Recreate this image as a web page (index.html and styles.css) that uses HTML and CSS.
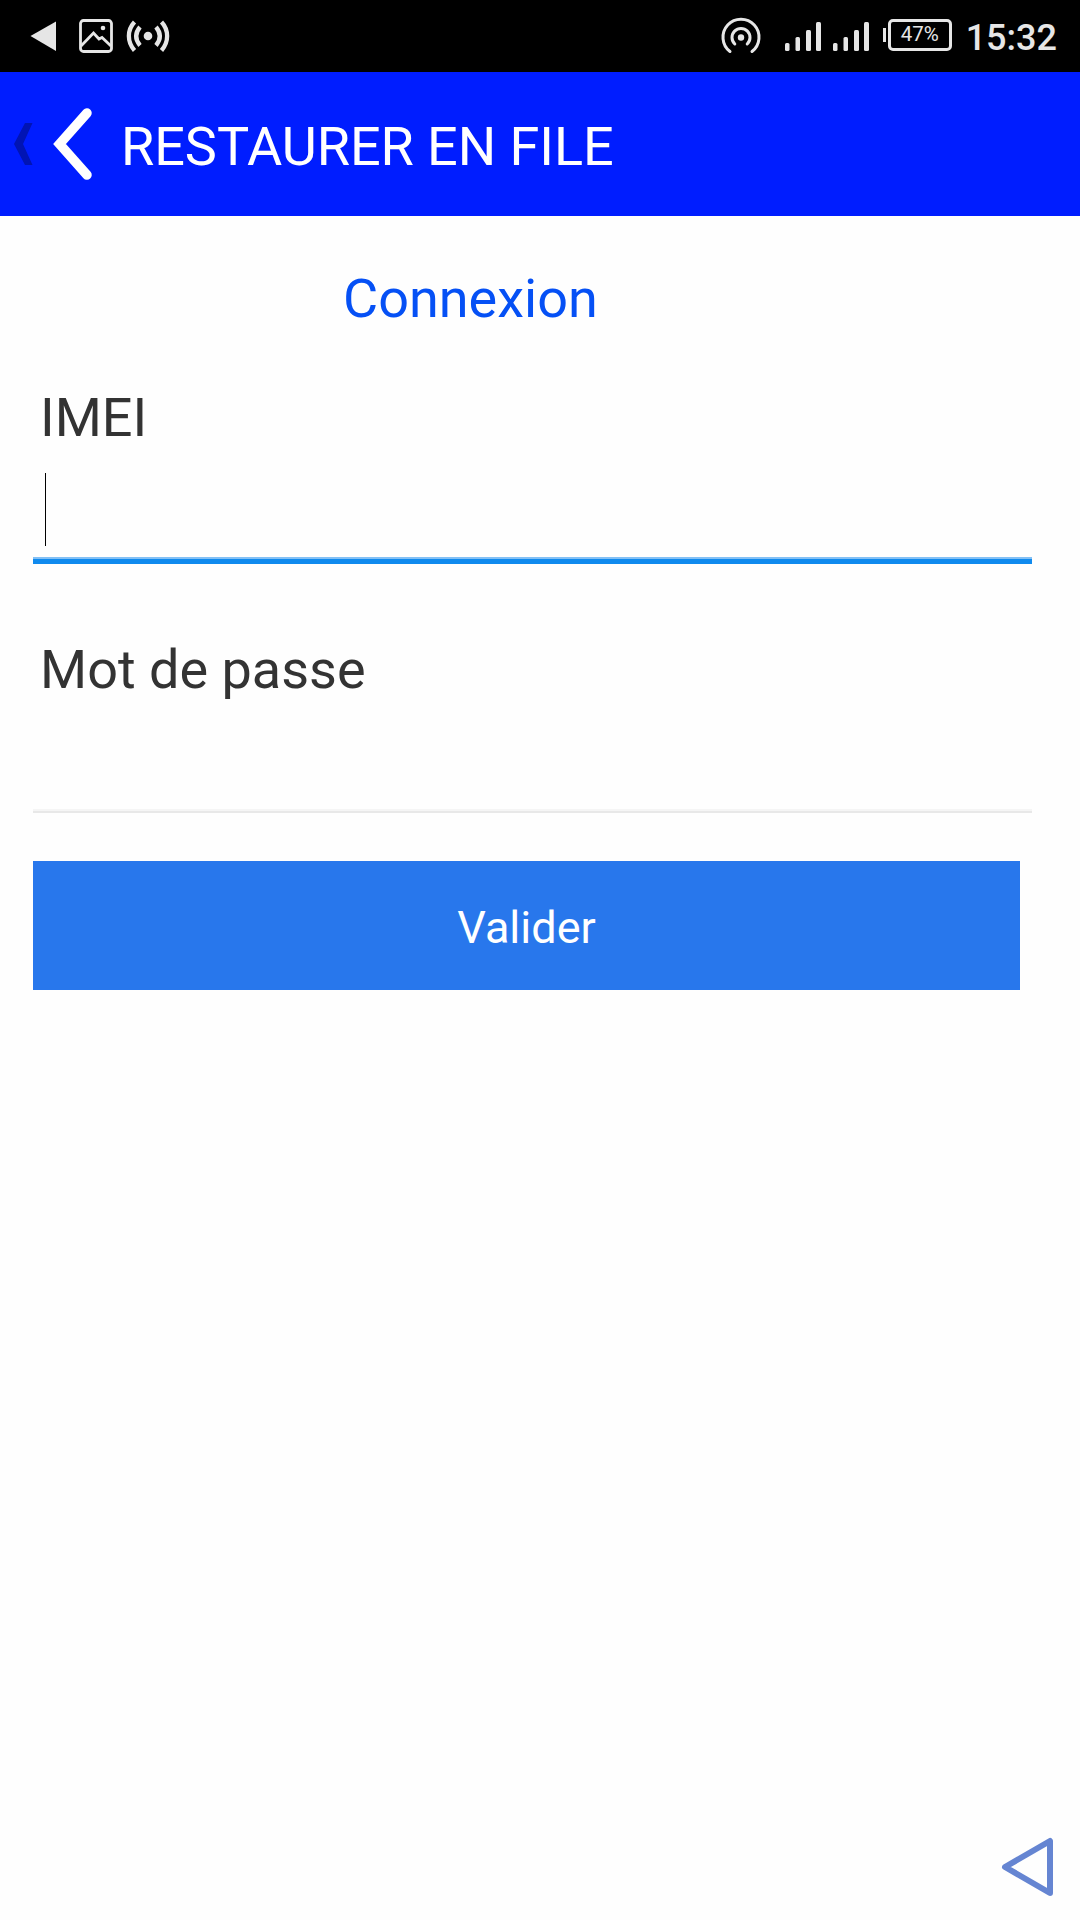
FILE: index.html
```
<!DOCTYPE html>
<html lang="fr">
  <head>
    <meta charset="UTF-8">
    <meta name="viewport" content="width=device-width, initial-scale=1.0">
    <title>Restaurer en file</title>
    <link rel="stylesheet" href="styles.css">
  </head>
  <body>
    <div class="statusbar">
      <svg class="notifications" width="240" height="72" viewBox="0 0 240 72">
        <path d="M30.5 36 L56 21.5 V51 Z" fill="#e6e6e6"/>
        <g fill="none" stroke="#e6e6e6">
          <rect x="80.5" y="20.5" width="31" height="31" rx="3" stroke-width="2.8"/>
          <path d="M81 46 L93.5 33 L99 39 L102 37.5 L111 46" stroke-width="2.8"/>
          <path d="M134.500 22 C127 30 127 42 134.500 50.500 M161.500 22 C169 30 169 42 161.500 50.500" stroke-width="4.300"/>
          <path d="M140 27 C135 33 135 39.500 140 45.500 M156 27 C161 33 161 39.500 156 45.500" stroke-width="4.300"/>
        </g>
        <circle cx="103" cy="28" r="2.3" fill="#e6e6e6"/>
        <circle cx="148" cy="36" r="4.3" fill="#e6e6e6"/>
      </svg>
      <div class="indicators">
        <svg width="172" height="72" viewBox="710 0 172 72">
          <g fill="none" stroke="#e6e6e6" stroke-width="3" stroke-linecap="round">
            <path d="M730 51.500 A18 18 0 1 1 752 51.500"/>
            <path d="M734.800 44 A9 9 0 1 1 747.200 44"/>
          </g>
          <circle cx="741" cy="37.500" r="3.2" fill="#e6e6e6"/>
          <g fill="#e6e6e6">
            <rect x="785" y="43" width="4.500" height="8" rx="1.500"/>
            <rect x="795.500" y="37" width="4.500" height="14" rx="1.500"/>
            <rect x="806" y="30" width="5" height="21" rx="1.500"/>
            <rect x="816" y="22" width="5" height="29" rx="1.500"/>
            <rect x="833" y="43" width="4.500" height="8" rx="1.500"/>
            <rect x="843.500" y="37" width="4.500" height="14" rx="1.500"/>
            <rect x="854" y="30" width="5" height="21" rx="1.500"/>
            <rect x="864" y="22" width="5" height="29" rx="1.500"/>
          </g>
        </svg>
        <div class="battery-tip"></div>
        <div class="battery">47%</div>
        <div class="clock">15:32</div>
      </div>
    </div>

    <div class="header">
      <svg class="back" width="121" height="144" viewBox="0 72 121 144">
        <path d="M25 123 H32.500 L23 144 L32.500 165 H25 L14 144 Z" fill="#0114b4"/>
        <path d="M87 113 L59.500 144 L87 175" fill="none" stroke="#fff" stroke-width="9.500" stroke-linecap="round"/>
      </svg>
      <h1>RESTAURER EN FILE</h1>
    </div>

    <form class="login">
      <h2>Connexion</h2>
      <label for="imei">IMEI</label>
      <div class="field active">
        <span class="caret"></span>
        <input type="text" id="imei">
      </div>
      <label for="password">Mot de passe</label>
      <div class="field">
        <input type="password" id="password">
      </div>
      <button type="button">Valider</button>
    </form>

    <div class="footer">
      <svg width="58" height="64" viewBox="0 0 58 64">
        <path d="M5 32 L50 6 V58 Z" fill="none" stroke="#6585d2" stroke-width="6" stroke-linejoin="round"/>
      </svg>
    </div>
  </body>
</html>
```
FILE: styles.css
```
* {
  box-sizing: border-box;
}

body {
  margin: 0;
  min-height: 1920px;
  display: flex;
  flex-direction: column;
  background-color: #fefefe;
  font-family: Roboto, sans-serif;
}

/* Status bar */
.statusbar {
  height: 72px;
  display: flex;
  justify-content: space-between;
  background-color: #000;
  color: #e6e6e6;
}

.indicators {
  display: flex;
  align-items: center;
  padding-right: 23px;
}

.battery-tip {
  width: 3px;
  height: 14px;
  margin: 0 2px 3px 1px;
  background-color: #e6e6e6;
}

.battery {
  width: 64px;
  height: 32px;
  margin-bottom: 2px;
  border: 3px solid #e6e6e6;
  border-radius: 5px;
  font-size: 20.5px;
  line-height: 25px;
  text-align: center;
}

.clock {
  margin-left: 14px;
  padding-top: 3px;
  font-size: 36px;
  font-weight: 500;
  line-height: 42px;
}

/* Header */
.header {
  height: 144px;
  display: flex;
  align-items: center;
  background-color: #001dff;
}

.header h1 {
  margin: 0;
  padding-top: 5px;
  color: #fff;
  font-size: 54px;
  font-weight: 400;
  line-height: 64px;
  letter-spacing: -0.05px;
}

/* Login form */
.login {
  display: flex;
  flex-direction: column;
  padding: 51px 48px 0 33px;
}

.login h2 {
  margin: 0 0 55px;
  padding-left: 310px;
  color: #0550f5;
  font-size: 54px;
  font-weight: 400;
  line-height: 64px;
}

.login label {
  padding-left: 7px;
  color: #333;
  font-size: 54px;
  line-height: 64px;
}

.field {
  height: 111px;
  margin-bottom: 48px;
  display: flex;
  border-bottom: 2px solid #e8e8e8;
  box-shadow: inset 0 -2px #f5f5f5;
}

.field input {
  flex: 1;
  border: 0;
  outline: 0;
  background: transparent;
  font: inherit;
  font-size: 54px;
}

.field.active {
  height: 114px;
  margin-bottom: 74px;
  border-bottom: 5px solid #108aee;
  box-shadow: inset 0 -2px #83c0f5;
}

.caret {
  width: 1px;
  height: 73px;
  margin: 23px 0 0 12px;
  background-color: #000;
}

.login button {
  width: 987px;
  height: 129px;
  padding: 4px 0 0;
  border: 0;
  background-color: #2877ec;
  color: #fff;
  font-family: inherit;
  font-size: 45px;
}

.footer {
  margin-top: auto;
  padding: 0 22px 21px 0;
  display: flex;
  justify-content: flex-end;
}
```
